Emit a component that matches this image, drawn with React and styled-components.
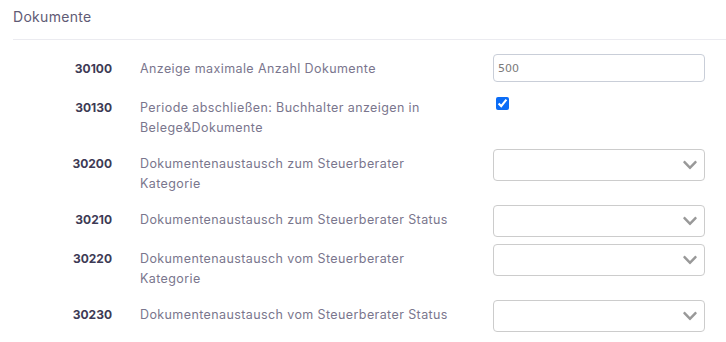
import styled, { createGlobalStyle } from "styled-components";
import { FaChevronDown } from "react-icons/fa";

const settings = [
  { code: "30100", label: "Anzeige maximale Anzahl Dokumente", type: "text", value: "500" },
  { code: "30130", label: "Periode abschließen: Buchhalter anzeigen in Belege&Dokumente", type: "check" },
  { code: "30200", label: "Dokumentenaustausch zum Steuerberater Kategorie", type: "select" },
  { code: "30210", label: "Dokumentenaustausch zum Steuerberater Status", type: "select" },
  { code: "30220", label: "Dokumentenaustausch vom Steuerberater Kategorie", type: "select" },
  { code: "30230", label: "Dokumentenaustausch vom Steuerberater Status", type: "select" },
];

function Control({ item }) {
  if (item.type === "text") return <TextInput defaultValue={item.value} />;
  if (item.type === "check") return <Check type="checkbox" defaultChecked />;
  return (
    <SelectWrap>
      <Select defaultValue="">
        <option value=""></option>
      </Select>
      <Chevron />
    </SelectWrap>
  );
}

function App() {
  return (
    <>
      <GlobalStyle />
      <Page>
        <Header>Dokumente</Header>
        <Form>
          {settings.map((item) => (
            <Row key={item.code}>
              <Code>{item.code}</Code>
              <Label>{item.label}</Label>
              <Control item={item} />
            </Row>
          ))}
        </Form>
      </Page>
    </>
  );
}
export default App;

const GlobalStyle = createGlobalStyle`
  body {
    margin: 0;
    background: #fff;
    font-family: Inter, "Noto Sans", sans-serif;
  }
`;

const Page = styled.div`
  padding-left: 13px;
`;

const Header = styled.div`
  font-size: 14px;
  color: #5f5b75;
  line-height: 20px;
  letter-spacing: 0.3px;
  padding: 7px 0 12px;
  border-bottom: 1px solid #ebebf0;
`;

const Form = styled.div`
  display: flex;
  flex-direction: column;
  gap: 7px;
  padding-top: 14px;
`;

const Row = styled.div`
  display: grid;
  grid-template-columns: 99px 325px 212px;
  column-gap: 28px;
  align-items: start;
`;

const Code = styled.div`
  text-align: right;
  font-size: 12px;
  font-weight: 700;
  color: #3d3a55;
  line-height: 20px;
  padding: 5px 0 4px;
`;

const Label = styled.div`
  font-size: 12.5px;
  letter-spacing: 0.4px;
  color: #7a768d;
  line-height: 20px;
  padding: 5px 0 4px;
`;

const TextInput = styled.input`
  box-sizing: border-box;
  width: 212px;
  height: 28px;
  margin: 0 0 4px;
  padding: 0 4px;
  border: 1px solid #c9ced8;
  border-radius: 4px;
  font-family: "DejaVu Sans", sans-serif;
  font-size: 11px;
  color: #7a7a7a;
  outline: none;
`;

const Check = styled.input`
  width: 13px;
  height: 13px;
  margin: 4px 0 0 3px;
  accent-color: #0b6cf6;
`;

const SelectWrap = styled.div`
  position: relative;
  width: 212px;
  height: 32px;
`;

const Select = styled.select`
  box-sizing: border-box;
  width: 100%;
  height: 100%;
  appearance: none;
  background: #fff;
  border: 1px solid #cccccc;
  border-radius: 4px;
  outline: none;
`;

const Chevron = styled(FaChevronDown)`
  position: absolute;
  right: 7px;
  top: 8px;
  font-size: 16px;
  color: #999999;
  pointer-events: none;
`;
